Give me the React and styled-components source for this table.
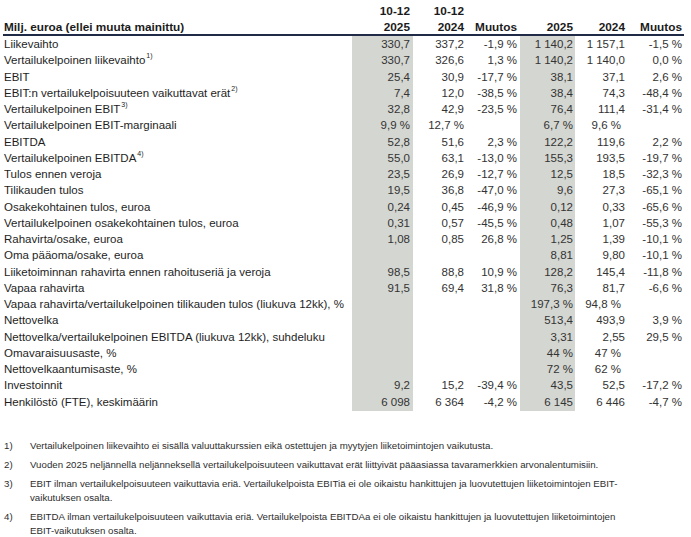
import React from 'react';
import styled, { createGlobalStyle } from 'styled-components';

const GlobalStyle = createGlobalStyle`
  body {
    margin: 0;
    background: #fff;
    font-family: "Liberation Sans", Arial, sans-serif;
  }
`;

const COLS = '349px 61px 54px 53px 55px 52px 57px';
const SHADE = '#d4d6d1';

const Page = styled.div`
  width: 681px;
  margin-left: 3px;
  padding-top: 3px;
`;

const HeadRow = styled.div`
  display: grid;
  grid-template-columns: ${COLS};
  height: ${p => p.$h || 16}px;
  align-items: center;
  font-weight: bold;
  font-size: 11.8px;
  color: #1b1b1b;
`;

const Header = styled.div`
  border-bottom: 2px solid #1f2b47;
`;

const HeadCell = styled.div`
  text-align: ${p => (p.$left ? 'left' : 'right')};
  padding: ${p => (p.$left ? '0 0 0 1px' : `0 ${p.$pr || 3}px 0 0`)};
  white-space: nowrap;
`;

const Body = styled.div`
  background: linear-gradient(
    to right,
    transparent 349px,
    ${SHADE} 349px,
    ${SHADE} 410px,
    transparent 410px,
    transparent 517px,
    ${SHADE} 517px,
    ${SHADE} 572px,
    transparent 572px
  );
  padding-bottom: 1px;
`;

const Row = styled.div`
  display: grid;
  grid-template-columns: ${COLS};
  height: 16.25px;
  align-items: center;
  font-size: 11.5px;
  color: #2a2a2a;
`;

const Label = styled.div`
  padding-left: 1px;
  white-space: nowrap;
  color: #1e1e1e;
`;

const Sup = styled.sup`
  font-size: 7px;
  vertical-align: top;
  position: relative;
  top: -2px;
  margin-left: 1px;
`;

const Value = styled.div`
  text-align: right;
  padding-right: ${p => p.$pr || 3}px;
  white-space: nowrap;
  color: #333;
`;

const Notes = styled.div`
  margin-top: 28px;
  display: flex;
  flex-direction: column;
  gap: 5px;
  font-size: 9.7px;
  color: #2e2e2e;
`;

const Note = styled.div`
  display: grid;
  grid-template-columns: 26px 1fr;
  line-height: 14px;
  padding-left: 1px;
`;

const rows = [
  ['Liikevaihto', null, '330,7', '337,2', '-1,9 %', '1 140,2', '1 157,1', '-1,5 %'],
  ['Vertailukelpoinen liikevaihto', '1)', '330,7', '326,6', '1,3 %', '1 140,2', '1 140,0', '0,0 %'],
  ['EBIT', null, '25,4', '30,9', '-17,7 %', '38,1', '37,1', '2,6 %'],
  ['EBIT:n vertailukelpoisuuteen vaikuttavat erät', '2)', '7,4', '12,0', '-38,5 %', '38,4', '74,3', '-48,4 %'],
  ['Vertailukelpoinen EBIT', '3)', '32,8', '42,9', '-23,5 %', '76,4', '111,4', '-31,4 %'],
  ['Vertailukelpoinen EBIT-marginaali', null, '9,9 %', '12,7 %', '', '6,7 %', '9,6 %', ''],
  ['EBITDA', null, '52,8', '51,6', '2,3 %', '122,2', '119,6', '2,2 %'],
  ['Vertailukelpoinen EBITDA', '4)', '55,0', '63,1', '-13,0 %', '155,3', '193,5', '-19,7 %'],
  ['Tulos ennen veroja', null, '23,5', '26,9', '-12,7 %', '12,5', '18,5', '-32,3 %'],
  ['Tilikauden tulos', null, '19,5', '36,8', '-47,0 %', '9,6', '27,3', '-65,1 %'],
  ['Osakekohtainen tulos, euroa', null, '0,24', '0,45', '-46,9 %', '0,12', '0,33', '-65,6 %'],
  ['Vertailukelpoinen osakekohtainen tulos, euroa', null, '0,31', '0,57', '-45,5 %', '0,48', '1,07', '-55,3 %'],
  ['Rahavirta/osake, euroa', null, '1,08', '0,85', '26,8 %', '1,25', '1,39', '-10,1 %'],
  ['Oma pääoma/osake, euroa', null, '', '', '', '8,81', '9,80', '-10,1 %'],
  ['Liiketoiminnan rahavirta ennen rahoituseriä ja veroja', null, '98,5', '88,8', '10,9 %', '128,2', '145,4', '-11,8 %'],
  ['Vapaa rahavirta', null, '91,5', '69,4', '31,8 %', '76,3', '81,7', '-6,6 %'],
  ['Vapaa rahavirta/vertailukelpoinen tilikauden tulos (liukuva 12kk), %', null, '', '', '', '197,3 %', '94,8 %', ''],
  ['Nettovelka', null, '', '', '', '513,4', '493,9', '3,9 %'],
  ['Nettovelka/vertailukelpoinen EBITDA (liukuva 12kk), suhdeluku', null, '', '', '', '3,31', '2,55', '29,5 %'],
  ['Omavaraisuusaste, %', null, '', '', '', '44 %', '47 %', ''],
  ['Nettovelkaantumisaste, %', null, '', '', '', '72 %', '62 %', ''],
  ['Investoinnit', null, '9,2', '15,2', '-39,4 %', '43,5', '52,5', '-17,2 %'],
  ['Henkilöstö (FTE), keskimäärin', null, '6 098', '6 364', '-4,2 %', '6 145', '6 446', '-4,7 %'],
];

// right padding per value column; col 5 percentages sit a little further left
const pad = (col, v) => {
  if (col === 5) return v.endsWith('%') ? 6 : 2;
  if (col === 6) return 2;
  if (col === 4) return 2;
  return 3;
};

const notes = [
  ['1)', 'Vertailukelpoinen liikevaihto ei sisällä valuuttakurssien eikä ostettujen ja myytyjen liiketoimintojen vaikutusta.'],
  ['2)', 'Vuoden 2025 neljännellä neljänneksellä vertailukelpoisuuteen vaikuttavat erät liittyivät pääasiassa tavaramerkkien arvonalentumisiin.'],
  ['3)', <>EBIT ilman vertailukelpoisuuteen vaikuttavia eriä. Vertailukelpoista EBITiä ei ole oikaistu hankittujen ja luovutettujen liiketoimintojen EBIT-<br />vaikutuksen osalta.</>],
  ['4)', <>EBITDA ilman vertailukelpoisuuteen vaikuttavia eriä. Vertailukelpoista EBITDAa ei ole oikaistu hankittujen ja luovutettujen liiketoimintojen<br />EBIT-vaikutuksen osalta.</>],
];

export default function App() {
  return (
    <Page>
      <GlobalStyle />
      <Header>
        <HeadRow $h={16}>
          <HeadCell $left />
          <HeadCell>10-12</HeadCell>
          <HeadCell>10-12</HeadCell>
        </HeadRow>
        <HeadRow $h={15}>
          <HeadCell $left>Milj. euroa (ellei muuta mainittu)</HeadCell>
          <HeadCell>2025</HeadCell>
          <HeadCell>2024</HeadCell>
          <HeadCell>Muutos</HeadCell>
          <HeadCell $pr={2}>2025</HeadCell>
          <HeadCell $pr={2}>2024</HeadCell>
          <HeadCell $pr={2}>Muutos</HeadCell>
        </HeadRow>
      </Header>
      <Body>
        {rows.map(([label, sup, ...vals]) => (
          <Row key={label}>
            <Label>
              {label}
              {sup && <Sup>{sup}</Sup>}
            </Label>
            {vals.map((v, i) => (
              <Value key={i} $pr={pad(i + 1, v)}>{v}</Value>
            ))}
          </Row>
        ))}
      </Body>
      <Notes>
        {notes.map(([n, text]) => (
          <Note key={n}>
            <span>{n}</span>
            <span>{text}</span>
          </Note>
        ))}
      </Notes>
    </Page>
  );
}
